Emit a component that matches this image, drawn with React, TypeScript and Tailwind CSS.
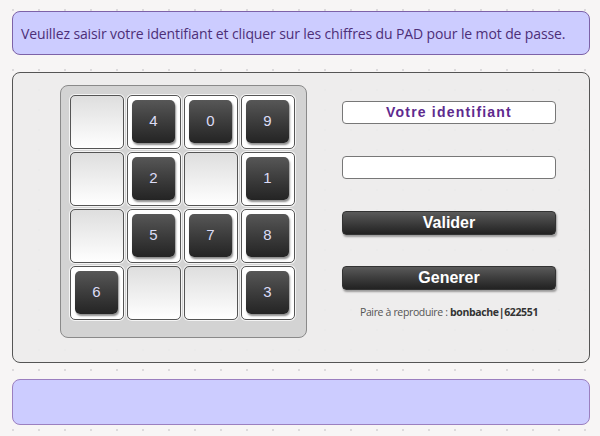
import React, { useState } from 'react';

// grille du PAD : null = case vide
const PAD: (number | null)[][] = [
  [null, 4, 0, 9],
  [null, 2, null, 1],
  [null, 5, 7, 8],
  [6, null, null, 3],
];

const PadCell: React.FC<{ digit: number | null; onPress: (d: number) => void }> = ({ digit, onPress }) => {
  if (digit === null) {
    return (
      <div className="w-[54px] h-[54px] rounded-[5px] border border-[#555] bg-gradient-to-b from-[#dedede] to-white shadow-[0_0_0_1px_#f4f4f4]" />
    );
  }
  return (
    <div className="w-[54px] h-[54px] rounded-[5px] border border-[#555] bg-white shadow-[0_0_0_1px_#f4f4f4] flex items-center justify-center">
      <button
        onClick={() => onPress(digit)}
        className="w-[43px] h-[43px] mr-[1px] mb-[1px] rounded-[5px] bg-gradient-to-b from-[#575757] to-[#242424] shadow-[1px_2px_2px_rgba(0,0,0,0.45)] text-[#dcdcf6] text-[15px] font-['Liberation_Sans',sans-serif] flex items-center justify-center"
      >
        {digit}
      </button>
    </div>
  );
};

const DarkButton: React.FC<{ label: string }> = ({ label }) => (
  <button className="w-[214px] h-[24px] rounded-[4px] bg-gradient-to-b from-[#5a5a5a] to-[#222] border border-[#333] shadow-[1px_2px_2px_rgba(0,0,0,0.35)] text-white text-[16px] font-bold font-['Liberation_Sans',sans-serif] flex items-center justify-center">
    {label}
  </button>
);

export default function App() {
  const [password, setPassword] = useState('');

  return (
    <div className="w-[600px] h-[436px] overflow-hidden bg-[#f7f5f5] bg-[radial-gradient(#d9d7d9_0.8px,transparent_1px)] bg-[size:26px_20px] pt-[11px] px-[12px] flex flex-col font-['Open_Sans',sans-serif]">
      <div className="w-[578px] h-[44px] rounded-[8px] border border-[#7d62a8] bg-[#ccccff] flex items-center pl-[8px]">
        <p className="text-[14px] tracking-[-0.12px] text-[#4d2f78]">
          Veuillez saisir votre identifiant et cliquer sur les chiffres du PAD pour le mot de passe.
        </p>
      </div>

      <div className="mt-[17px] w-[578px] h-[291px] rounded-[8px] border border-[#555] bg-[#ececec]/90 flex pl-[47px] pt-[12px]">
        <div className="w-[247px] h-[253px] rounded-[8px] border border-[#8a8a8a] bg-[#d3d3d3] pl-[9px] pt-[9px]">
          <div className="grid grid-cols-[repeat(4,54px)] gap-[3px]">
            {PAD.flat().map((d, i) => (
              <PadCell key={i} digit={d} onPress={(n) => setPassword(p => p + n)} />
            ))}
          </div>
        </div>

        <div className="ml-[35px] w-[214px] flex flex-col pt-[16px]">
          <div className="h-[23px] rounded-[4px] border border-[#777] bg-white flex items-center justify-center text-[#5e2a8e] text-[14px] font-bold tracking-[1.2px] font-['Liberation_Sans',sans-serif]">
            Votre identifiant
          </div>
          <input
            className="mt-[32px] h-[23px] rounded-[4px] border border-[#777] bg-white outline-none px-2 text-[13px]"
            value={password}
            readOnly
          />
          <div className="mt-[32px]">
            <DarkButton label="Valider" />
          </div>
          <div className="mt-[31px]">
            <DarkButton label="Generer" />
          </div>
          <p className="mt-[15px] text-center text-[10.5px] text-[#555] tracking-[-0.35px]">
            Paire à reproduire : <span className="font-bold text-[#333]">bonbache|622551</span>
          </p>
        </div>
      </div>

      <div className="mt-[16px] w-[578px] h-[46px] rounded-[8px] border border-[#9b7fc0] bg-[#ccccff]" />
    </div>
  );
}
